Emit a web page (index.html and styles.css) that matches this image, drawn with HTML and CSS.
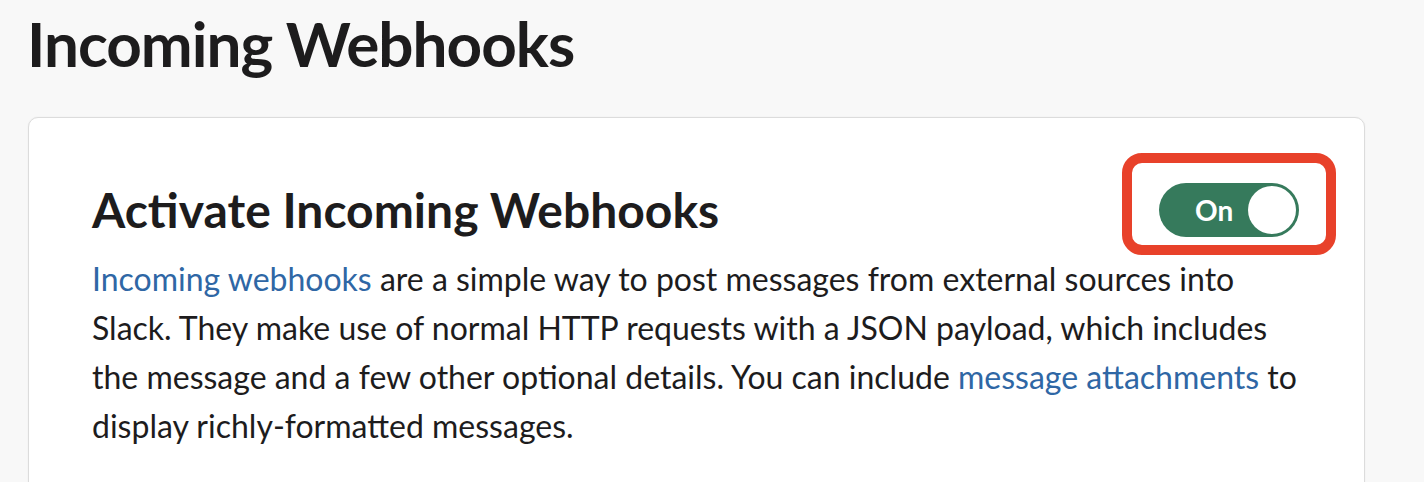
FILE: index.html
```html
<!DOCTYPE html>
<html lang="en">
<head>
<meta charset="utf-8">
<title>Incoming Webhooks</title>
<link rel="stylesheet" href="styles.css">
</head>
<body>
<div class="page">
  <h1 class="page-title">Incoming Webhooks</h1>
  <section class="card">
    <div class="card-head">
      <h2 class="card-title">Activate Incoming Webhooks</h2>
      <div class="toggle-wrap">
        <button class="toggle" type="button"><span class="toggle-label">On</span><span class="toggle-knob"></span></button>
        <span class="highlight"></span>
      </div>
    </div>
    <p class="card-text"><a class="link" href="#">Incoming webhooks</a> are a simple way to post messages from external sources into Slack. They make use of normal HTTP requests with a JSON payload, which includes the message and a few other optional details. You can include <a class="link" href="#">message attachments</a> to display richly-formatted messages.</p>
  </section>
</div>
</body>
</html>
```
FILE: styles.css
```css
* { box-sizing: border-box; }
html, body { margin: 0; padding: 0; }
body {
  background: #f8f8f8;
  font-family: Lato, "Noto Sans", sans-serif;
  color: #1d1c1d;
  overflow: hidden;
}
.page {
  padding: 0 59px 0 27px;
}
.page-title {
  margin: 0;
  padding-top: 8px;
  font-size: 62px;
  line-height: 70px;
  font-weight: 700;
  letter-spacing: -1px;
}
.card {
  margin-top: 39px;
  margin-left: 1px;
  background: #fff;
  border: 1px solid #dcdcdc;
  border-radius: 10px;
  box-shadow: 0 0 2px rgba(0,0,0,0.06);
  padding: 60px 65px 60px 63px;
  min-height: 420px;
}
.card-head {
  display: flex;
  align-items: center;
  justify-content: space-between;
}
.card-title {
  margin: 0;
  font-size: 48px;
  line-height: 64px;
  font-weight: 700;
}
.toggle-wrap {
  position: relative;
}
.toggle {
  display: flex;
  align-items: center;
  width: 140px;
  height: 54px;
  padding: 0 3px 0 36px;
  border: none;
  border-radius: 27px;
  background: #367a5c;
  font-family: inherit;
}
.toggle-label {
  color: #fff;
  font-size: 28px;
  font-weight: 700;
  flex: 1;
  text-align: left;
}
.toggle-knob {
  width: 48px;
  height: 48px;
  border-radius: 50%;
  background: #fff;
}
.highlight {
  position: absolute;
  left: -37px;
  top: -30px;
  width: 214px;
  height: 102px;
  border: 10px solid #e8412a;
  border-radius: 20px;
}
.card-text {
  margin: 12px 0 0;
  font-size: 32px;
  line-height: 49px;
}
.link {
  color: #2f67a5;
  text-decoration: none;
}
```
